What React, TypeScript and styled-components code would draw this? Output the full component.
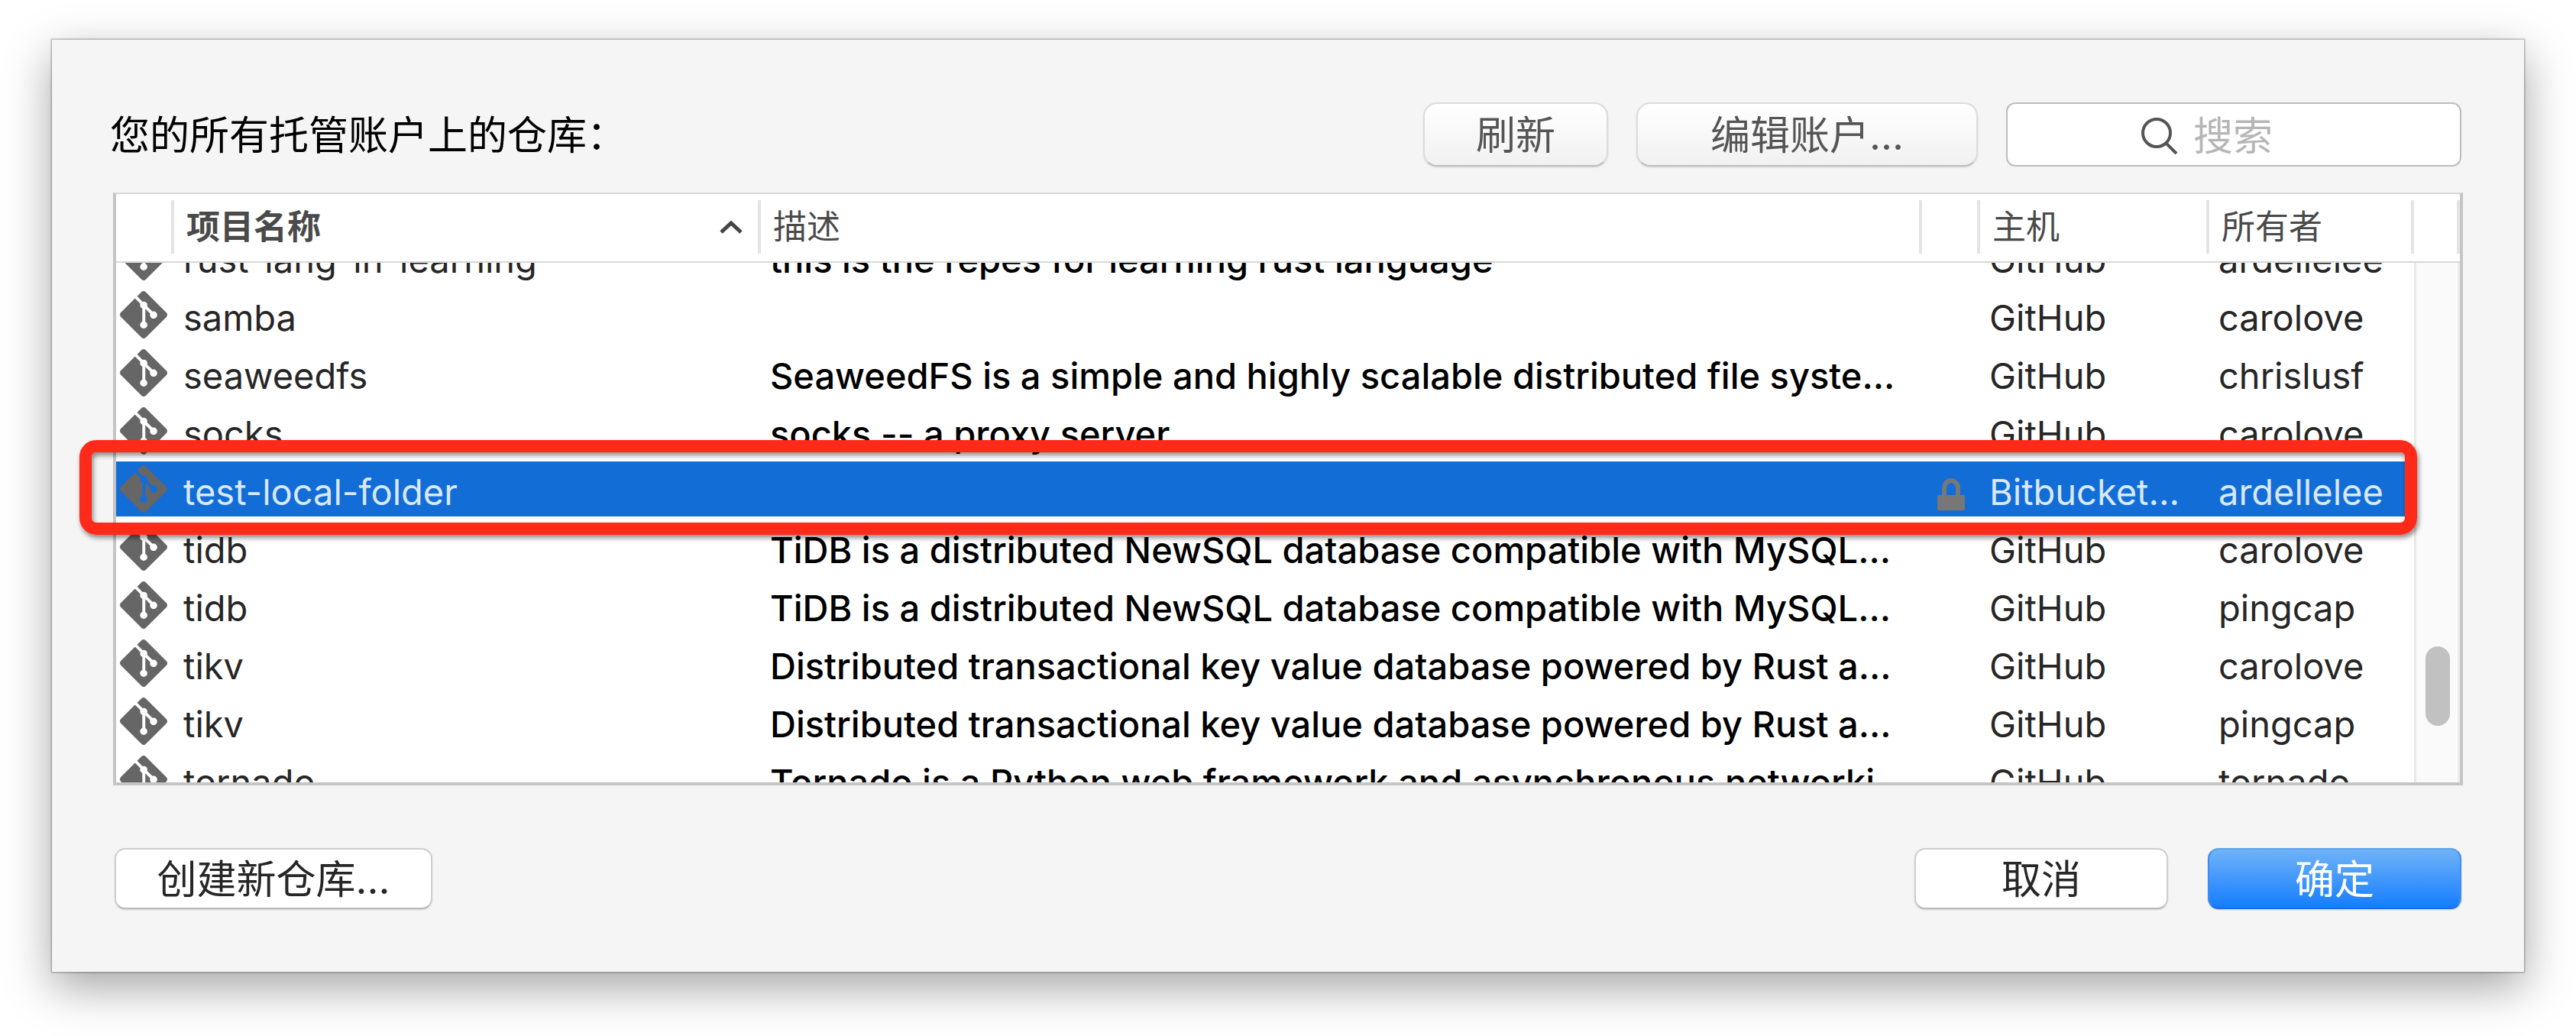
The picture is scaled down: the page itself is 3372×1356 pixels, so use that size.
import React from 'react';
import styled, { createGlobalStyle, css } from 'styled-components';
import { SiGit } from 'react-icons/si';

const columns = '76px 768px minmax(0, 1fr) 76px 300px 268px';

const GlobalStyle = createGlobalStyle`
  *, *::before, *::after { box-sizing: border-box; }
  body {
    margin: 0;
    background: #fff;
    font-family: Inter, "Noto Sans CJK SC", sans-serif;
    color: #000;
  }
  button, input { font: inherit; }
`;

const Page = styled.main`
  padding: 52px 68px 84px;
`;

const Dialog = styled.section`
  display: flex;
  flex-direction: column;
  background: #f5f5f5;
  box-shadow: 0 0 2px 1px rgba(0, 0, 0, 0.35), 0 20px 56px rgba(0, 0, 0, 0.36);
`;

const Toolbar = styled.header`
  display: flex;
  align-items: center;
  padding: 82px 82px 34px 76px;
`;

const Title = styled.h1`
  margin: 0;
  padding-top: 4px;
  flex: 1;
  font-size: 52px;
  line-height: 80px;
  font-weight: 400;
`;

const Button = styled.button<{ $width: number }>`
  width: ${(p) => p.$width}px;
  height: 80px;
  padding: 4px 0 0;
  border: 2px solid #cfcfcf;
  border-bottom-color: #b9b9b9;
  border-radius: 14px;
  background: #fff;
  box-shadow: 0 1px 2px rgba(0, 0, 0, 0.15);
  color: #262626;
  font-size: 52px;
  line-height: 72px;
`;

const ToolButton = styled(Button)`
  height: 84px;
  border-color: #dcdcdc;
  border-bottom-color: #bebebe;
  border-radius: 18px;
  background: linear-gradient(#fff, #f1f1f1);
  color: #555;
  margin-right: 37px;
`;

const PrimaryButton = styled(Button)`
  border-color: #5ea5ea #3f8cf0 #1a6cf0;
  background: linear-gradient(#6fb3f9, #167dff) padding-box, #3f8cf0;
  color: #fff;
`;

const SearchField = styled.label`
  display: flex;
  align-items: center;
  gap: 20px;
  width: 596px;
  height: 84px;
  padding: 4px 0 0 175px;
  border: 2px solid #bdbdbd;
  border-radius: 12px;
  background: #fff;
`;

const SearchInput = styled.input`
  flex: 1;
  min-width: 0;
  height: 76px;
  padding: 0;
  border: 0;
  outline: 0;
  background: transparent;
  font-size: 52px;
  &::placeholder { color: #b6b6b6; opacity: 1; }
`;

const Frame = styled.div`
  position: relative;
  margin: 0 80px;
  border: 4px solid #c5c5c5;
  border-top: 2px solid #d8d8d8;
  background: #fff;
`;

const Table = styled.table`
  display: flex;
  flex-direction: column;
`;

const Head = styled.thead`
  display: block;
  border-bottom: 2px solid #d8d8d8;
`;

const HeadRow = styled.tr`
  display: grid;
  grid-template-columns: ${columns} 60px;
  height: 88px;
  padding: 8px 0 10px;
`;

const HeadCell = styled.th<{ $sorted?: boolean }>`
  display: flex;
  align-items: center;
  justify-content: space-between;
  padding: 0 20px 0 16px;
  border-right: 4px solid #e4e4e4;
  color: #4a4a4a;
  font-size: 44px;
  line-height: 64px;
  font-weight: ${(p) => (p.$sorted ? 700 : 400)};
`;

const Body = styled.tbody`
  display: block;
  height: 680px;
  padding-right: 60px;
  overflow: hidden;
`;

const Cell = styled.td<{ $strong?: boolean }>`
  padding: 4px 0 0 12px;
  overflow: hidden;
  white-space: nowrap;
  font-size: 47px;
  line-height: 72px;
  font-weight: ${(p) => (p.$strong ? 500 : 400)};
  color: ${(p) => (p.$strong ? '#000' : '#262626')};
`;

const IconCell = styled.td`
  display: flex;
  align-items: center;
  justify-content: center;
  padding: 0 4px 0 0;
  color: #666;
`;

const LockCell = styled(IconCell)`
  padding: 14px 0 0;
  color: #777;
`;

const Row = styled.tr<{ $selected: boolean }>`
  display: grid;
  grid-template-columns: ${columns};
  height: 76px;
  border: solid #fff;
  border-width: 2px 0;
  &:first-child { margin-top: -46px; }
  ${(p) =>
    p.$selected &&
    css`
      background: #126dd7;
      ${Cell} { color: #d9e8fc; }
    `}
`;

const ScrollTrack = styled.div`
  position: absolute;
  top: 90px;
  right: 0;
  bottom: 0;
  width: 60px;
  padding: 502px 0 0 12px;
  border-left: 3px solid #e9e9e9;
  border-right: 3px solid #ededed;
  background: #fafafa;
`;

const ScrollThumb = styled.div`
  width: 32px;
  height: 104px;
  border-radius: 16px;
  background: #c1c1c1;
`;

const Highlight = styled.div`
  position: absolute;
  top: 322px;
  left: -48px;
  right: 56px;
  height: 124px;
  border: 16px solid #ff2a1a;
  border-radius: 22px;
  box-shadow: 2px 4px 6px rgba(0, 0, 0, 0.45), inset 2px 4px 6px rgba(0, 0, 0, 0.45);
  pointer-events: none;
`;

const Footer = styled.footer`
  display: flex;
  gap: 52px;
  padding: 82px;
`;

const Spacer = styled.div`
  flex: 1;
`;

const Lock = () => (
  <svg width="36" height="42" viewBox="0 0 36 42" aria-hidden="true">
    <path d="M9 23V13a9 10 0 0 1 18 0v10" fill="none" stroke="currentColor" strokeWidth="6" />
    <rect y="22" width="36" height="20" rx="2" fill="currentColor" />
  </svg>
);

const Magnifier = () => (
  <svg width="48" height="48" viewBox="0 0 48 48" fill="none" stroke="#555" strokeWidth="4" aria-hidden="true">
    <circle cx="20" cy="20" r="18" />
    <path d="M32 33l14 14" />
  </svg>
);

const SortUp = () => (
  <svg width="30" height="18" viewBox="0 0 30 18" fill="none" stroke="#444" strokeWidth="5" aria-hidden="true">
    <path d="M2 16L15 4l13 12" />
  </svg>
);

interface Repo {
  name: string;
  description?: string;
  host: string;
  owner: string;
  selected?: boolean;
}

const tidb = 'TiDB is a distributed NewSQL database compatible with MySQL...';
const tikv = 'Distributed transactional key value database powered by Rust a...';

const repos: Repo[] = [
  { name: 'rust-lang-in-learning', description: 'this is the repes for learning rust language', host: 'GitHub', owner: 'ardellelee' },
  { name: 'samba', host: 'GitHub', owner: 'carolove' },
  { name: 'seaweedfs', description: 'SeaweedFS is a simple and highly scalable distributed file syste...', host: 'GitHub', owner: 'chrislusf' },
  { name: 'socks', description: 'socks -- a proxy server', host: 'GitHub', owner: 'carolove' },
  { name: 'test-local-folder', host: 'Bitbucket...', owner: 'ardellelee', selected: true },
  { name: 'tidb', description: tidb, host: 'GitHub', owner: 'carolove' },
  { name: 'tidb', description: tidb, host: 'GitHub', owner: 'pingcap' },
  { name: 'tikv', description: tikv, host: 'GitHub', owner: 'carolove' },
  { name: 'tikv', description: tikv, host: 'GitHub', owner: 'pingcap' },
  { name: 'tornado', description: 'Tornado is a Python web framework and asynchronous networki...', host: 'GitHub', owner: 'tornado' },
];

export default function App() {
  return (
    <Page>
      <GlobalStyle />
      <Dialog>
        <Toolbar>
          <Title>您的所有托管账户上的仓库：</Title>
          <ToolButton type="button" $width={242}>刷新</ToolButton>
          <ToolButton type="button" $width={447}>编辑账户...</ToolButton>
          <SearchField>
            <Magnifier />
            <SearchInput type="text" placeholder="搜索" aria-label="搜索" />
          </SearchField>
        </Toolbar>
        <Frame>
          <Table>
            <Head>
              <HeadRow>
                <HeadCell />
                <HeadCell $sorted>项目名称<SortUp /></HeadCell>
                <HeadCell>描述</HeadCell>
                <HeadCell />
                <HeadCell>主机</HeadCell>
                <HeadCell>所有者</HeadCell>
                <HeadCell />
              </HeadRow>
            </Head>
            <Body>
              {repos.map((repo, i) => (
                <Row key={i} $selected={!!repo.selected}>
                  <IconCell><SiGit size={62} /></IconCell>
                  <Cell>{repo.name}</Cell>
                  <Cell $strong>{repo.description}</Cell>
                  <LockCell>{repo.selected && <Lock />}</LockCell>
                  <Cell>{repo.host}</Cell>
                  <Cell>{repo.owner}</Cell>
                </Row>
              ))}
            </Body>
          </Table>
          <ScrollTrack>
            <ScrollThumb />
          </ScrollTrack>
          <Highlight />
        </Frame>
        <Footer>
          <Button type="button" $width={416}>创建新仓库...</Button>
          <Spacer />
          <Button type="button" $width={332}>取消</Button>
          <PrimaryButton type="button" $width={332}>确定</PrimaryButton>
        </Footer>
      </Dialog>
    </Page>
  );
}
